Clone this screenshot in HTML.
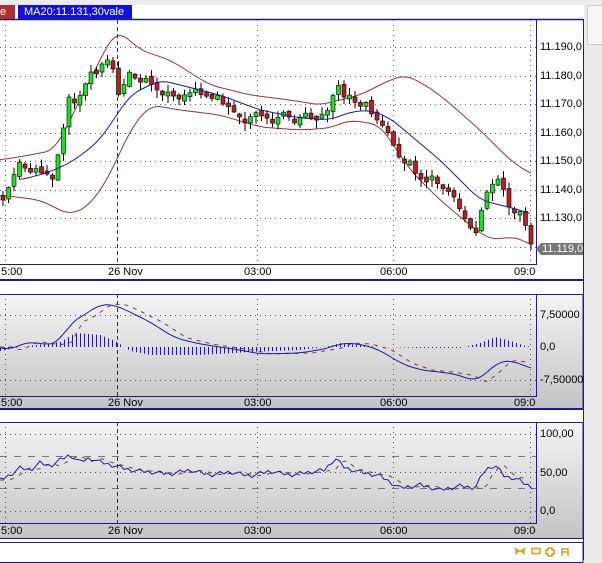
<!DOCTYPE html>
<html><head><meta charset="utf-8"><style>
body{margin:0;width:602px;height:563px;overflow:hidden;background:#fff;font-family:"Liberation Sans",sans-serif;position:relative}
.a{position:absolute;z-index:2}
.lbl{position:absolute;font-size:11px;color:#000;line-height:12px;z-index:2}
svg{z-index:1}
</style></head><body>
<svg style="position:absolute;left:0;top:0" width="602" height="563" id="s">
<g fill="none" stroke="#1c1c8c">
<line x1="0" y1="19.5" x2="583" y2="19.5" stroke-width="1.5"/>
<line x1="583.5" y1="19" x2="583.5" y2="560"/>
<line x1="536.5" y1="20" x2="536.5" y2="264"/>
<line x1="0" y1="264.5" x2="537" y2="264.5"/>
<line x1="0" y1="280" x2="583" y2="280" stroke-width="2"/>
</g>
<defs><linearGradient id="g" x1="0" y1="0" x2="0" y2="1"><stop offset="0" stop-color="#f4f4f4"/><stop offset="1" stop-color="#c4c4c4"/></linearGradient></defs>
<rect x="0" y="294" width="583" height="114" fill="url(#g)"/>
<rect x="0" y="422" width="583" height="116" fill="url(#g)"/>
<rect x="-1" y="294.5" width="584" height="114" fill="none" stroke="#1c1c8c"/>
<line x1="536.5" y1="294" x2="536.5" y2="396" stroke="#1c1c8c"/>
<line x1="0" y1="396.5" x2="537" y2="396.5" stroke="#1c1c8c"/>
<line x1="0" y1="409" x2="584" y2="409" stroke="#1c1c8c" stroke-width="2"/>
<rect x="-1" y="422.5" width="584" height="116" fill="none" stroke="#1c1c8c"/>
<line x1="536.5" y1="422" x2="536.5" y2="523" stroke="#1c1c8c"/>
<line x1="0" y1="523.5" x2="537" y2="523.5" stroke="#1c1c8c"/>
<rect x="-1" y="542.5" width="584" height="20" fill="#fff" stroke="#1c1c8c"/>
<g id="grid" stroke="#555" stroke-dasharray="1,4" stroke-width="1"></g>
<g id="plot"></g>
<g fill="none" stroke="#d4a020" stroke-width="1.5">
<path d="M515 548l4 3-4 3M525 548l-4 3 4 3M515 551h10"/>
<rect x="532" y="548.5" width="8" height="5"/>
<path d="M548 548h4v2h2v4h-2v2h-4v-2h-2v-4h2z"/>
<path d="M562 556v-7h6v7M562 552h6"/>
</g>
<path d="M536 249l5-6h42v12h-42z" fill="#777"/>
</svg>
<div class="a" style="left:0;top:0;width:584px;height:5px;background:#ececec"></div>
<div class="a" style="left:584px;top:0;width:18px;height:563px;background:#ececec"></div>
<div class="a" style="left:587px;top:5px;width:15px;height:38px;background:#f7f7f7;border:1px solid #ccc"></div>
<div class="a" style="left:0;top:5px;width:15px;height:14px;background:#b03030;color:#fff;font-size:11px;line-height:14px">e</div>
<div class="a" style="left:18px;top:5px;width:108px;height:14px;background:#1010e0;color:#fff;font-size:11px;line-height:14px;padding-left:6px;white-space:nowrap">MA20:11.131,30vale</div>
<div class="lbl" style="left:542px;top:243px;color:#fff;width:41px;overflow:hidden;white-space:nowrap">11.119,0</div>
<div class="lbl" style="left:540px;top:41px">11.190,0</div>
<div class="lbl" style="left:540px;top:70px">11.180,0</div>
<div class="lbl" style="left:540px;top:98px">11.170,0</div>
<div class="lbl" style="left:540px;top:127px">11.160,0</div>
<div class="lbl" style="left:540px;top:155px">11.150,0</div>
<div class="lbl" style="left:540px;top:184px">11.140,0</div>
<div class="lbl" style="left:540px;top:212px">11.130,0</div>
<div class="lbl" style="left:540px;top:309px">7,50000</div>
<div class="lbl" style="left:540px;top:341px">0,0</div>
<div class="lbl" style="left:540px;top:374px">-7,50000</div>
<div class="lbl" style="left:540px;top:428px">100,00</div>
<div class="lbl" style="left:540px;top:467px">50,00</div>
<div class="lbl" style="left:540px;top:505px">0,0</div>
<div class="lbl" style="left:1px;top:266px">5:00</div><div class="lbl" style="left:108px;top:266px">26 Nov</div><div class="lbl" style="left:244px;top:266px">03:00</div><div class="lbl" style="left:380px;top:266px">06:00</div><div class="lbl" style="left:514px;top:266px;width:22px;overflow:hidden">09:00</div>
<div class="lbl" style="left:1px;top:397px">5:00</div><div class="lbl" style="left:108px;top:397px">26 Nov</div><div class="lbl" style="left:244px;top:397px">03:00</div><div class="lbl" style="left:380px;top:397px">06:00</div><div class="lbl" style="left:514px;top:397px;width:22px;overflow:hidden">09:00</div>
<div class="lbl" style="left:1px;top:525px">5:00</div><div class="lbl" style="left:108px;top:525px">26 Nov</div><div class="lbl" style="left:244px;top:525px">03:00</div><div class="lbl" style="left:380px;top:525px">06:00</div><div class="lbl" style="left:514px;top:525px;width:22px;overflow:hidden">09:00</div>
<script>
(function(){
var NS="http://www.w3.org/2000/svg";
function el(p,t,a){var e=document.createElementNS(NS,t);for(var k in a)e.setAttribute(k,a[k]);p.appendChild(e);return e;}
var grid=document.getElementById('grid'),plot=document.getElementById('plot');
[47,76,104,133,161,190,218,247].forEach(function(y){el(grid,'line',{x1:0,y1:y+.5,x2:536,y2:y+.5});});
[315,380].forEach(function(y){el(grid,'line',{x1:0,y1:y+.5,x2:536,y2:y+.5});});
[434,472,511].forEach(function(y){el(grid,'line',{x1:0,y1:y+.5,x2:536,y2:y+.5});});
[[5,20,264],[257,20,264],[393,20,264],[530,20,264],[5,294,396],[257,294,396],[393,294,396],[530,294,396],[5,422,523],[257,422,523],[393,422,523],[530,422,523]].forEach(function(v){el(grid,'line',{x1:v[0]+.5,y1:v[1],x2:v[0]+.5,y2:v[2]});});
[[20,264],[294,396],[422,523]].forEach(function(v){el(plot,'line',{x1:117.5,y1:v[0],x2:117.5,y2:v[1],stroke:'#333','stroke-dasharray':'4,3'});});
function pl(pts,col,w,dash){var d=pts.map(function(p,i){return (i?'L':'M')+p[0]+' '+p[1];}).join('');var a={d:d,fill:'none',stroke:col,'stroke-width':w||1};if(dash)a['stroke-dasharray']=dash;el(plot,'path',a);}
function interp(pts,x){if(x<=pts[0][0])return pts[0][1];for(var i=1;i<pts.length;i++){if(x<=pts[i][0]){var a=pts[i-1],b=pts[i];return a[1]+(b[1]-a[1])*(x-a[0])/(b[0]-a[0]);}}return pts[pts.length-1][1];}
function smooth(pts){var r=[];for(var x=pts[0][0];x<=pts[pts.length-1][0];x+=3){var s=0,n=0;for(var k=-9;k<=9;k+=3){s+=interp(pts,x+k);n++;}r.push([x,s/n]);}return r;}
var up=[[0,160],[30,155],[55,150],[90,80],[110,40],[118,30],[140,50],[170,60],[210,85],[250,95],[290,100],[320,105],[340,100],[360,95],[390,80],[405,75],[420,82],[440,95],[480,130],[510,160],[532,175]];
var lo=[[0,195],[40,200],[70,215],[90,205],[110,175],[130,130],[150,105],[180,110],[220,115],[260,127],[300,130],[330,128],[350,120],[380,125],[410,170],[440,200],[470,225],[490,240],[510,237],[525,240],[532,247]];
var ma=[[20,180],[50,172],[75,160],[100,140],[130,95],[160,80],[180,85],[220,95],[260,110],[300,118],[330,120],[350,112],[370,110],[390,118],[410,135],[440,160],[460,180],[480,200],[500,205],[520,210],[532,215]];
var cl=[[0,195],[5,200],[12,185],[20,165],[35,170],[45,178],[55,175],[62,145],[70,100],[78,105],[85,90],[92,75],[100,70],[108,62],[114,72],[120,100],[130,75],[140,78],[150,85],[160,95],[170,100],[180,98],[200,97],[210,100],[220,105],[230,110],[240,120],[250,120],[260,118],[270,122],[280,120],[300,120],[320,122],[330,112],[338,85],[345,100],[355,105],[365,108],[375,120],[385,130],[392,140],[398,160],[405,160],[415,175],[425,185],[435,185],[445,190],[455,200],[462,215],[470,228],[476,240],[482,215],[488,195],[495,185],[502,180],[508,210],[515,210],[522,215],[527,230],[532,247]];
pl(smooth(up),'#8b3a3a',1);pl(smooth(lo),'#8b3a3a',1);
var prev=interp(cl,0);
for(var x=1;x<532;x+=5.5){var xi=Math.round(x);var c=interp(cl,x+3)+((xi*7)%7-3),o=prev+((xi*3)%5-2);if(Math.abs(c-o)<3)c=o+(xi%2?4:-4);
var t=Math.min(o,c),b=Math.max(o,c),hi=t-1-((xi*11)%7),lw=b+1+((xi*13)%8);
el(plot,'line',{x1:x+2,y1:hi,x2:x+2,y2:lw,stroke:'#000'});
el(plot,'rect',{x:x,y:t,width:4,height:Math.max(1,b-t),fill:c<o?'#22dd22':'#bb1e1e',stroke:'#000','stroke-width':.6});prev=c;}
pl(smooth(ma),'#1c1c9c',1);
var mac=[[0,347],[10,351],[20,344],[30,342],[50,345],[60,342],[70,322],[80,318],[100,304],[115,305],[130,312],[150,322],[175,338],[200,344],[240,350],[260,354],[300,353],[330,348],[340,343],[360,344],[380,350],[400,363],[420,370],[440,372],[460,375],[475,382],[490,370],[500,360],[515,362],[525,365],[532,370]];
var sig=[];for(var x=0;x<=532;x+=6)sig.push([x,interp(mac,x-12)]);
var hist=[[0,4],[20,0],[60,-5],[75,-14],[100,-12],[115,-6],[130,4],[150,8],[200,8],[250,5],[300,3],[330,-1],[340,-4],[360,-2],[380,0],[420,1],[460,1],[480,-4],[495,-10],[510,-6],[525,-1],[532,0]];
for(var x=0;x<532;x+=4){var h=interp(hist,x);el(plot,'line',{x1:x+.5,y1:347,x2:x+.5,y2:347+h,stroke:'#1c1c9c'});}
pl(sig,'#8b3a3a',1,'4,5');pl(smooth(mac),'#1c1c9c',1);
var rsi=[[0,480],[10,475],[20,468],[30,470],[40,463],[50,466],[60,460],[70,455],[80,462],[90,458],[100,462],[115,466],[130,470],[150,472],[170,474],[190,470],[210,475],[230,472],[250,476],[270,471],[290,475],[310,472],[325,470],[335,458],[345,468],[360,472],[380,476],[400,488],[420,485],[440,490],[460,486],[475,488],[485,470],[495,465],[505,477],[515,478],[525,484],[532,487]];
el(grid,'line',{x1:0,y1:456.5,x2:536,y2:456.5,'stroke-dasharray':'7,7',stroke:'#777'});
el(grid,'line',{x1:0,y1:488.5,x2:536,y2:488.5,'stroke-dasharray':'7,7',stroke:'#777'});
var rs=[];for(var x=0;x<=532;x+=4){rs.push([x,interp(rsi,x)+((x*7)%5-2)]);}
var rsig=[];for(var x=0;x<=532;x+=6)rsig.push([x,interp(rsi,x-10)]);
pl(rsig,'#8b3a3a',1,'4,6');
pl(rs,'#1c1c9c',1);
})();
</script>
</body></html>
